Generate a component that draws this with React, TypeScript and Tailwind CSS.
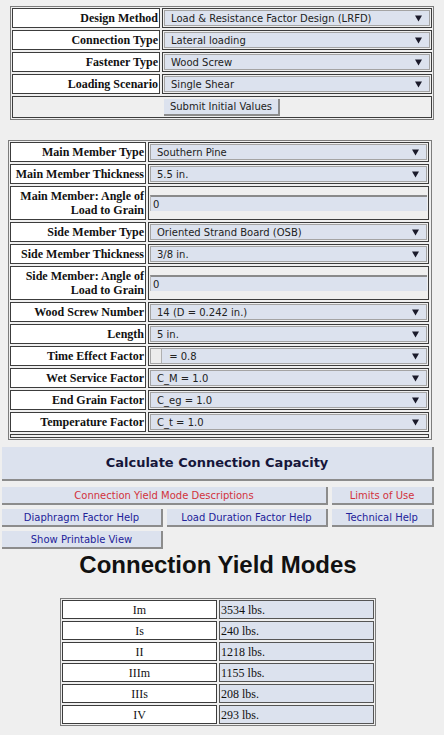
import React from "react";

const serif = "font-['Liberation_Serif','Times_New_Roman',serif]";
const sans = "font-['DejaVu_Sans','Verdana',sans-serif]";

function Arrow() {
  return (
    <svg width="7" height="7" viewBox="0 0 7 7" className="shrink-0">
      <path d="M0 0.5 H7 L3.5 6.5 Z" fill="#1a1a2a" />
    </svg>
  );
}

// fake select box, like the browser's native one
function Select({ value, indent }: { value: string; indent?: boolean }) {
  return (
    <div className="h-full border border-[#a4a4a4] bg-[#dce2ee] flex items-center justify-between pr-[7px]">
      {indent ? (
        <div className="flex items-stretch h-full">
          <div className="w-[10px] bg-[#ececec]" />
          <div className="border-l border-[#b0b0b0] flex items-center pl-[4px]">
            <span className={`${sans} text-[10px] text-[#222] whitespace-pre`}>{value}</span>
          </div>
        </div>
      ) : (
        <span className={`${sans} text-[10px] text-[#222] pl-[6px] whitespace-pre`}>{value}</span>
      )}
      <Arrow />
    </div>
  );
}

function TextInput({ value }: { value: string }) {
  return (
    <div className="h-full flex items-center">
      <div className="w-full h-[16px] border-t-2 border-t-[#8a8a8a] border-l border-l-[#b8b8b8] bg-[#dce2ee] flex items-center pl-[2px]">
        <span className={`${sans} text-[10px] text-[#222]`}>{value}</span>
      </div>
    </div>
  );
}

type Row = {
  label: React.ReactNode;
  value: string;
  kind?: "select" | "input" | "indent";
  tall?: boolean;
};

const initialRows: Row[] = [
  { label: "Design Method", value: "Load & Resistance Factor Design (LRFD)" },
  { label: "Connection Type", value: "Lateral loading" },
  { label: "Fastener Type", value: "Wood Screw" },
  { label: "Loading Scenario", value: "Single Shear" },
];

const memberRows: Row[] = [
  { label: "Main Member Type", value: "Southern Pine" },
  { label: "Main Member Thickness", value: "5.5 in." },
  {
    label: (
      <>
        Main Member: Angle of
        <br />
        Load to Grain
      </>
    ),
    value: "0",
    kind: "input",
    tall: true,
  },
  { label: "Side Member Type", value: "Oriented Strand Board (OSB)" },
  { label: "Side Member Thickness", value: "3/8 in." },
  {
    label: (
      <>
        Side Member: Angle of
        <br />
        Load to Grain
      </>
    ),
    value: "0",
    kind: "input",
    tall: true,
  },
  { label: "Wood Screw Number", value: "14 (D = 0.242 in.)" },
  { label: "Length", value: "5 in." },
  { label: "Time Effect Factor", value: " = 0.8", kind: "indent" },
  { label: "Wet Service Factor", value: "C_M = 1.0" },
  { label: "End Grain Factor", value: "C_eg = 1.0" },
  { label: "Temperature Factor", value: "C_t = 1.0" },
];

const yieldModes = [
  ["Im", "3534 lbs."],
  ["Is", "240 lbs."],
  ["II", "1218 lbs."],
  ["IIIm", "1155 lbs."],
  ["IIIs", "208 lbs."],
  ["IV", "293 lbs."],
];

function FormRow({ row, labelW }: { row: Row; labelW: string }) {
  return (
    <div className={`flex gap-[2px] ${row.tall ? "h-[34px]" : "h-[20px]"}`}>
      <div
        className={`${labelW} shrink-0 bg-white border border-[#3c3c3c] flex items-center justify-end pr-[1px] text-right ${serif} font-bold text-[12px] leading-[14px] text-[#111]`}
      >
        <div>{row.label}</div>
      </div>
      <div className="flex-1 border border-[#3c3c3c] p-[1px]">
        {row.kind === "input" ? (
          <TextInput value={row.value} />
        ) : (
          <Select value={row.value} indent={row.kind === "indent"} />
        )}
      </div>
    </div>
  );
}

function PageButton({
  children,
  w,
  red,
}: {
  children: React.ReactNode;
  w: string;
  red?: boolean;
}) {
  return (
    <div
      className={`${w} h-[18px] bg-[#dce2ee] border-r-2 border-b-2 border-[#8c8c8c] flex items-center justify-center ${sans} text-[10px] ${
        red ? "text-[#d2323c]" : "text-[#23239a]"
      }`}
    >
      {children}
    </div>
  );
}

export default function App() {
  return (
    <div className="w-[444px] h-[735px] bg-[#efefef] overflow-hidden">
      {/* Initial values */}
      <div className="mt-[6px] ml-[10px] w-[424px] border border-[#7c7c7c] p-[1px] flex flex-col gap-[2px]">
        {initialRows.map((r, i) => (
          <FormRow key={i} row={r} labelW="w-[148px]" />
        ))}
        <div className="h-[22px] border border-[#3c3c3c] flex items-center justify-center">
          <div
            className={`h-[17px] px-[6px] bg-[#dce2ee] border-r-2 border-b-2 border-[#8c8c8c] flex items-center ${sans} text-[10px] text-[#222]`}
          >
            Submit Initial Values
          </div>
        </div>
      </div>

      {/* Member properties */}
      <div className="mt-[20px] ml-[8px] w-[424px] border border-[#7c7c7c] p-[1px] pr-[2px] flex flex-col gap-[2px]">
        {memberRows.map((r, i) => (
          <FormRow key={i} row={r} labelW="w-[136px]" />
        ))}
        <div className="h-[4px] border border-[#3c3c3c]" />
      </div>

      {/* Calculate */}
      <div
        className={`mt-[7px] ml-[2px] w-[432px] h-[34px] bg-[#dce2ee] border-r-2 border-b-2 border-[#8c8c8c] flex items-center justify-center ${sans} font-bold text-[13px] text-[#16163a]`}
      >
        Calculate Connection Capacity
      </div>

      <div className="ml-[2px] mt-[6px] flex flex-col gap-[4px]">
        <div className="flex gap-[4px]">
          <PageButton w="w-[326px]" red>
            Connection Yield Mode Descriptions
          </PageButton>
          <PageButton w="w-[102px]" red>
            Limits of Use
          </PageButton>
        </div>
        <div className="flex gap-[4px]">
          <PageButton w="w-[161px]">Diaphragm Factor Help</PageButton>
          <PageButton w="w-[161px]">Load Duration Factor Help</PageButton>
          <PageButton w="w-[102px]">Technical Help</PageButton>
        </div>
        <div className="flex">
          <PageButton w="w-[161px]">Show Printable View</PageButton>
        </div>
      </div>

      <h2 className="mt-[2px] text-center font-['Liberation_Sans','Arial',sans-serif] font-bold text-[24px] leading-[28px] text-[#111] pr-[8px]">
        Connection Yield Modes
      </h2>

      {/* Results */}
      <div className="mt-[19px] ml-[60px] w-[316px] border border-[#7c7c7c] p-[1px] flex flex-col gap-[2px]">
        {yieldModes.map(([mode, val]) => (
          <div key={mode} className="flex gap-[2px] h-[19px]">
            <div
              className={`w-[155px] bg-white border border-[#3c3c3c] flex items-center justify-center ${serif} text-[12px] text-[#111]`}
            >
              {mode}
            </div>
            <div
              className={`w-[155px] bg-[#dce2ee] border border-[#555] flex items-center pl-[1px] ${serif} text-[12px] text-[#111]`}
            >
              {val}
            </div>
          </div>
        ))}
      </div>
    </div>
  );
}
